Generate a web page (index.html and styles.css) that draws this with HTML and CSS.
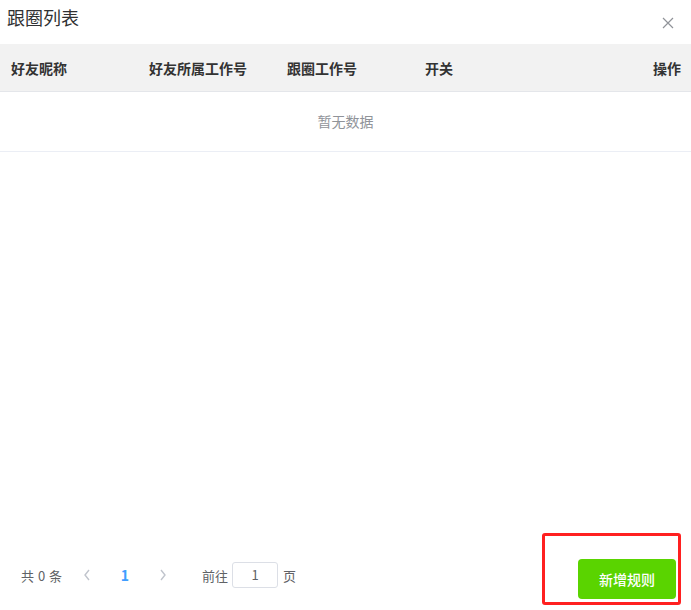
FILE: index.html
```html
<!DOCTYPE html>
<html lang="zh">
<head>
<meta charset="utf-8">
<link rel="stylesheet" href="styles.css">
</head>
<body>
<div class="dialog">
  <div class="dialog-header">
    <span class="title">跟圈列表</span>
    <svg class="close" width="12" height="12" viewBox="0 0 12 12"><path d="M1 1L11 11M11 1L1 11" stroke="#909399" stroke-width="1.2" fill="none"/></svg>
  </div>
  <div class="table">
    <div class="thead">
      <div class="th">好友昵称</div>
      <div class="th">好友所属工作号</div>
      <div class="th">跟圈工作号</div>
      <div class="th">开关</div>
      <div class="th th-last">操作</div>
    </div>
    <div class="empty">暂无数据</div>
  </div>
  <div class="spacer"></div>
  <div class="footer">
    <div class="pagination">
      <span class="total">共 0 条</span>
      <span class="btn-prev">
        <svg width="8" height="12" viewBox="0 0 8 12"><path d="M6 1L2 6L6 11" stroke="#c0c4cc" stroke-width="1.4" fill="none"/></svg>
      </span>
      <span class="pager">1</span>
      <span class="btn-next">
        <svg width="8" height="12" viewBox="0 0 8 12"><path d="M2 1L6 6L2 11" stroke="#c0c4cc" stroke-width="1.4" fill="none"/></svg>
      </span>
      <span class="jump">前往</span>
      <span class="page-input">1</span>
      <span class="jump-after">页</span>
    </div>
    <div class="highlight">
      <button class="btn-add">新增规则</button>
    </div>
  </div>
</div>
</body>
</html>
```

FILE: styles.css
```css
html, body {
  margin: 0;
  padding: 0;
  background: #fff;
}
body {
  font-family: "Noto Sans CJK SC", "Noto Sans", sans-serif;
  color: #606266;
}
.dialog {
  width: 691px;
  height: 610px;
  display: flex;
  flex-direction: column;
}
.dialog-header {
  height: 44px;
  display: flex;
  justify-content: space-between;
  align-items: flex-start;
  box-sizing: border-box;
  padding: 4px 17px 0 7px;
}
.title {
  font-size: 18px;
  line-height: 26px;
  color: #303133;
}
.close {
  margin-top: 13px;
}
.table {
  width: 691px;
}
.thead {
  display: flex;
  height: 47px;
  background: #f2f2f2;
  border-bottom: 1px solid #e4e6ea;
  align-items: center;
}
.th {
  width: 138px;
  box-sizing: border-box;
  padding-left: 11px;
  font-size: 14px;
  font-weight: bold;
  color: #333;
}
.th-last {
  flex: 1;
  text-align: right;
  padding-left: 0;
  padding-right: 10px;
}
.empty {
  height: 59px;
  line-height: 59px;
  text-align: center;
  font-size: 14px;
  color: #909399;
  border-bottom: 1px solid #ebeef5;
}
.spacer {
  flex: 1;
}
.footer {
  display: flex;
  justify-content: space-between;
  align-items: flex-end;
  padding: 0 10px 5px 21px;
}
.pagination {
  display: flex;
  align-items: center;
  font-size: 13px;
  color: #606266;
  height: 28px;
  margin-bottom: 16px;
}
.total {
  width: 48px;
  word-spacing: 1px;
}
.btn-prev, .btn-next {
  width: 36px;
  display: flex;
  justify-content: center;
  align-items: center;
  height: 28px;
}
.pager {
  width: 40px;
  text-align: center;
  font-weight: bold;
  color: #409eff;
  font-size: 14px;
}
.jump {
  margin-left: 21px;
  margin-right: 4px;
}
.page-input {
  width: 46px;
  height: 26px;
  box-sizing: border-box;
  border: 1px solid #dcdfe6;
  border-radius: 3px;
  text-align: center;
  line-height: 24px;
  color: #606266;
}
.jump-after {
  margin-left: 5px;
}
.highlight {
  width: 139px;
  height: 72px;
  box-sizing: border-box;
  border: 3px solid #ff2020;
  border-radius: 3px;
  display: flex;
  justify-content: flex-end;
  align-items: flex-end;
  padding: 0 2px 3px 0;
}
.btn-add {
  width: 98px;
  height: 40px;
  border: none;
  border-radius: 4px;
  background: #5ad400;
  color: #fff;
  font-family: "Noto Sans CJK SC", sans-serif;
  font-size: 14px;
  font-weight: 500;
  padding: 0;
}
```
